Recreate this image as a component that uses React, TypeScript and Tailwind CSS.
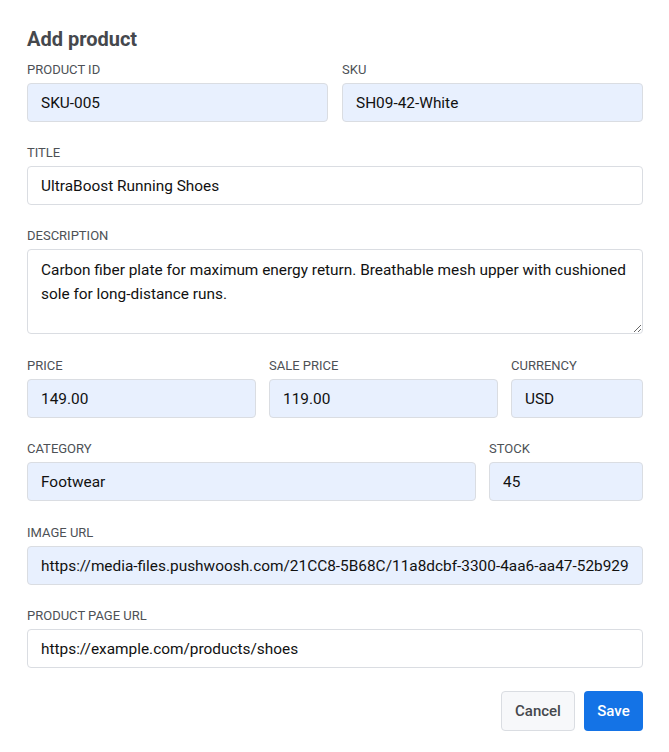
import React from 'react';

function Label({ children }: { children: React.ReactNode }) {
  return <div className="mb-[5px] h-[17px] pt-[1px] text-[13px] leading-4 font-normal uppercase text-[#4d5156]">{children}</div>;
}

function Field({ label, value, filled = true }: { label: string; value: string; filled?: boolean }) {
  return (
    <div className="min-w-0">
      <Label>{label}</Label>
      <input
        readOnly
        defaultValue={value}
        className={`h-[39px] w-full rounded-[4px] border border-[#dadde2] px-[13px] text-[15.4px] text-[#111] outline-none ${
          filled ? 'bg-[#e8f0fe]' : 'bg-white'
        }`}
      />
    </div>
  );
}

export default function App() {
  return (
    <div className="min-h-[752px] bg-white pl-[27px] pr-[26px] pt-[27px] pb-[21px] font-['Roboto',sans-serif]">
      <h2 className="h-6 text-[20px] leading-6 font-bold text-[#45484d]">Add product</h2>

      <div className="mt-[10px] flex flex-col gap-[22px]">
        {/* ids */}
        <div className="grid grid-cols-2 gap-[14px]">
          <Field label="Product ID" value="SKU-005" />
          <Field label="SKU" value="SH09-42-White" />
        </div>

        <Field label="Title" value="UltraBoost Running Shoes" filled={false} />

        <div>
          <Label>Description</Label>
          <textarea
            readOnly
            spellCheck={false}
            defaultValue="Carbon fiber plate for maximum energy return. Breathable mesh upper with cushioned sole for long-distance runs."
            className="block h-[85px] w-full rounded-[4px] border border-[#dadde2] bg-white px-[13px] py-[8px] text-[15.4px] leading-6 text-[#111] outline-none"
          />
        </div>

        {/* pricing */}
        <div className="mt-[1px] grid grid-cols-[229px_229px_1fr] gap-[13px]">
          <Field label="Price" value="149.00" />
          <Field label="Sale price" value="119.00" />
          <Field label="Currency" value="USD" />
        </div>

        <div className="grid grid-cols-[1fr_154px] gap-[13px]">
          <Field label="Category" value="Footwear" />
          <Field label="Stock" value="45" />
        </div>

        <div className="mt-[1px]">
          <Field
            label="Image URL"
            value="https://media-files.pushwoosh.com/21CC8-5B68C/11a8dcbf-3300-4aa6-aa47-52b929f0e1c4.png"
          />
        </div>

        <Field label="Product page URL" value="https://example.com/products/shoes" filled={false} />
      </div>

      {/* actions */}
      <div className="mt-[23px] flex justify-end gap-[9px]">
        <button className="h-10 w-[74px] rounded-[4px] border border-[#dadde2] bg-[#f7f8fa] text-[15px] font-medium text-[#45484d]">
          Cancel
        </button>
        <button className="h-10 w-[59px] rounded-[4px] bg-[#1473e6] text-[15px] font-medium text-white">
          Save
        </button>
      </div>
    </div>
  );
}
